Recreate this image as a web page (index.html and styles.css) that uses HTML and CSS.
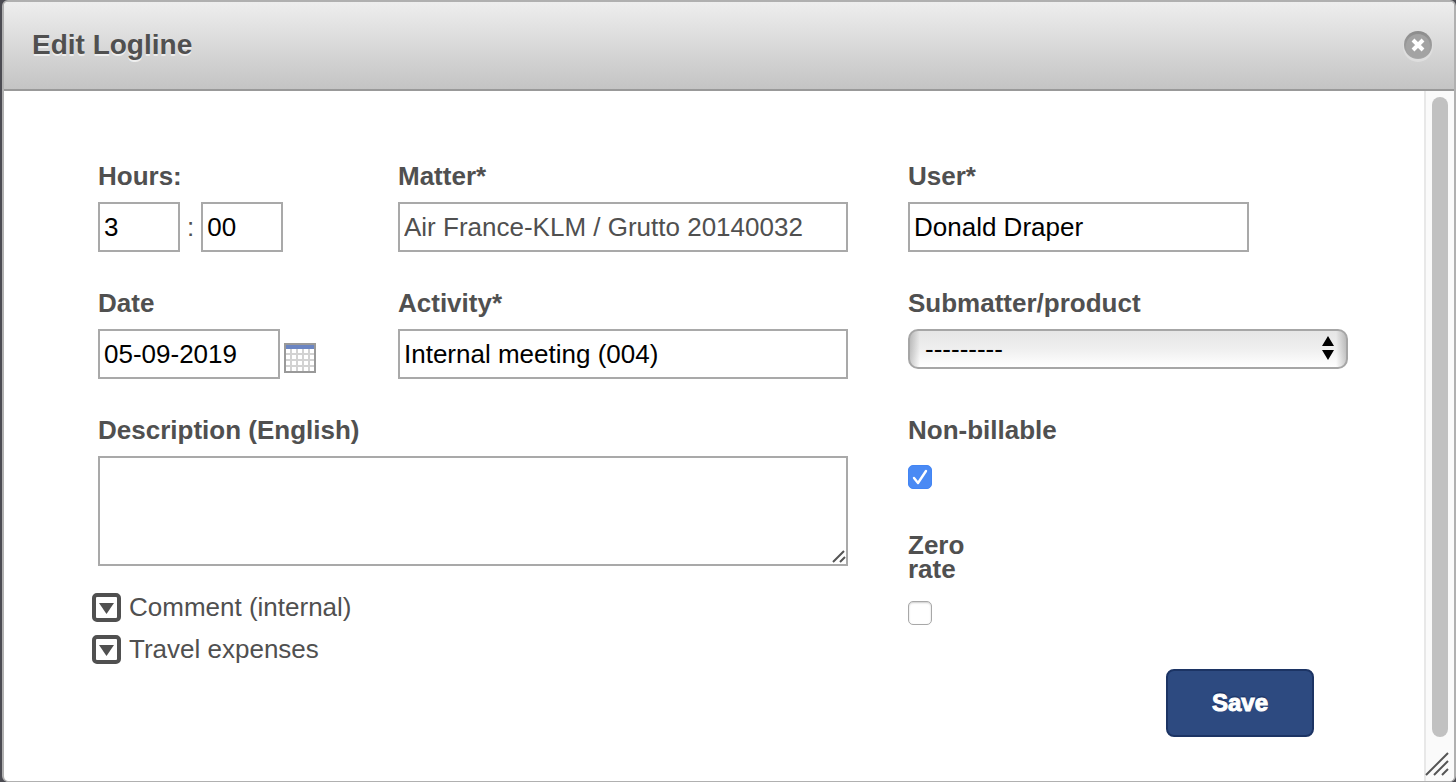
FILE: index.html
```html
<!DOCTYPE html>
<html lang="en">
<head>
    <meta charset="UTF-8">
    <meta name="viewport" content="width=device-width, initial-scale=1.0">
    <title>Edit Logline</title>
    <link rel="stylesheet" href="styles.css">
</head>
<body>
    <div class="dialog" role="dialog" aria-labelledby="dialog-title">
        <div class="dialog-header">
            <h1 id="dialog-title">Edit Logline</h1>
            <button type="button" class="close" aria-label="Close">
                <svg width="30" height="32" viewBox="0 0 30 32">
                    <defs>
                        <linearGradient id="disc" x1="0" y1="0" x2="0" y2="1">
                            <stop offset="0" stop-color="#8c8c8c"/>
                            <stop offset="1" stop-color="#a8a8a8"/>
                        </linearGradient>
                    </defs>
                    <circle cx="15" cy="17" r="15" fill="#dedede"/>
                    <circle cx="15" cy="15" r="14" fill="url(#disc)"/>
                    <circle cx="15" cy="16" r="12" fill="#a3a3a3"/>
                    <path d="M10 10l10 10M20 10l-10 10" stroke="#fff" stroke-width="4" fill="none"/>
                </svg>
            </button>
        </div>

        <div class="dialog-body">
            <form class="form">
                <div class="field">
                    <label for="hours">Hours:</label>
                    <div class="time">
                        <input type="text" id="hours" class="short" value="3">
                        <span>:</span>
                        <input type="text" class="short" value="00" aria-label="Minutes">
                    </div>
                </div>
                <div class="field">
                    <label for="matter">Matter*</label>
                    <input type="text" id="matter" value="Air France-KLM / Grutto 20140032" readonly>
                </div>
                <div class="field">
                    <label for="user">User*</label>
                    <input type="text" id="user" class="user" value="Donald Draper">
                </div>

                <div class="field">
                    <label for="date">Date</label>
                    <div class="date">
                        <input type="text" id="date" value="05-09-2019">
                        <button type="button" class="calendar" aria-label="Pick a date">
                            <svg width="32" height="30" viewBox="0 0 32 30">
                                <path fill="#999" d="M0 0h32v30H0z"/>
                                <path fill="#d2d2d2" d="M2 6h28v22H2z"/>
                                <path fill="#6b85c2" d="M2 2h28v4H2z"/>
                                <path stroke="#fff" stroke-width="4" stroke-dasharray="4 2" d="M2 8h28M2 14h28M2 20h28M2 26h28"/>
                            </svg>
                        </button>
                    </div>
                </div>
                <div class="field">
                    <label for="activity">Activity*</label>
                    <input type="text" id="activity" value="Internal meeting (004)">
                </div>
                <div class="field">
                    <label for="submatter">Submatter/product</label>
                    <div class="select">
                        <select id="submatter">
                            <option>---------</option>
                        </select>
                        <svg class="arrows" width="12" height="24" viewBox="0 0 12 24">
                            <path d="M6 0l6 10H0zM0 14h12L6 24z"/>
                        </svg>
                    </div>
                </div>

                <div class="field wide">
                    <label for="description">Description (English)</label>
                    <div class="textarea">
                        <textarea id="description"></textarea>
                        <svg class="grip" width="14" height="14" viewBox="0 0 14 14">
                            <path d="M1 13L12 2M8 13l5-5" stroke="#555" stroke-width="2" fill="none"/>
                        </svg>
                    </div>
                    <div class="toggles">
                        <a href="#comment">
                            <svg width="29" height="29" viewBox="0 0 29 29">
                                <rect x="2" y="2" width="25" height="25" rx="3" fill="none" stroke="#505050" stroke-width="4"/>
                                <path d="M7 10h15l-7.5 11z" fill="#505050"/>
                            </svg>
                            Comment (internal)
                        </a>
                        <a href="#travel">
                            <svg width="29" height="29" viewBox="0 0 29 29">
                                <rect x="2" y="2" width="25" height="25" rx="3" fill="none" stroke="#505050" stroke-width="4"/>
                                <path d="M7 10h15l-7.5 11z" fill="#505050"/>
                            </svg>
                            Travel expenses
                        </a>
                    </div>
                </div>
                <div class="options">
                    <label for="nonbillable">Non-billable</label>
                    <div class="check">
                        <input type="checkbox" id="nonbillable" checked>
                        <svg width="24" height="24" viewBox="0 0 24 24">
                            <path d="M6 13l4 5 8-12" stroke="#fff" stroke-width="2.4" fill="none" stroke-linecap="round" stroke-linejoin="round"/>
                        </svg>
                    </div>
                    <label for="zerorate" class="narrow">Zero rate</label>
                    <div class="check">
                        <input type="checkbox" id="zerorate">
                    </div>
                    <button type="submit" class="save">Save</button>
                </div>
            </form>

            <div class="scrollbar">
                <div class="thumb"></div>
                <svg class="resize" width="24" height="24" viewBox="0 0 24 24">
                    <path d="M1 23L23 1M9 23L23 9M17 23l6-6" stroke="#555" stroke-width="2" fill="none"/>
                </svg>
            </div>
        </div>
    </div>
</body>
</html>
```

FILE: styles.css
```css
* {
    box-sizing: border-box;
}

body {
    margin: 0;
    padding-left: 2px;
    background: #4b4b52;
    color: #505050;
    font-family: "Liberation Sans", Arial, sans-serif;
    font-size: 26px;
    line-height: 30px;
}

input,
select,
textarea,
button {
    margin: 0;
    font: inherit;
}

.dialog {
    display: flex;
    flex-direction: column;
    min-height: 100vh;
    border: 2px solid #b0b0b0;
    border-bottom-width: 1px;
    border-radius: 6px;
    background: #fff;
    overflow: hidden;
}

/* header */
.dialog-header {
    display: flex;
    align-items: center;
    justify-content: space-between;
    height: 89px;
    padding: 0 21px 2px 28px;
    border-bottom: 2px solid #999;
    background: linear-gradient(#eee, #c4c4c4);
}

h1 {
    margin: 0;
    font-size: 28px;
    text-shadow: 0 2px 0 #eee;
}

.close,
.calendar {
    padding: 0;
    border: 0;
    background: none;
    cursor: pointer;
}

.close {
    padding-top: 2px;
}

svg {
    display: block;
}

/* form */
.dialog-body {
    display: flex;
    flex: 1;
}

.form {
    display: grid;
    flex: 1;
    grid-template-columns: minmax(0, 240fr) minmax(0, 450fr) minmax(0, 440fr);
    gap: 36px 60px;
    align-content: start;
    padding: 70px 76px 42px 94px;
}

.wide {
    grid-column: span 2;
}

label {
    display: block;
    font-weight: bold;
}

.field label {
    margin-bottom: 11px;
}

input[type="text"],
textarea {
    display: block;
    width: 100%;
    height: 50px;
    padding: 0 4px;
    border: 2px solid #a9a9a9;
    border-radius: 0;
    background: #fff;
    color: #000;
}

input[readonly] {
    color: #505050;
}

.time,
.date {
    display: flex;
    align-items: center;
    gap: 7px;
}

.time .short {
    width: 82px;
}

.date {
    align-items: flex-end;
    gap: 4px;
}

.date input[type="text"] {
    width: 182px;
}

.calendar {
    margin-bottom: 6px;
}

input.user {
    width: 341px;
}

.select,
.textarea {
    position: relative;
}

select {
    display: block;
    width: 100%;
    height: 40px;
    padding: 0 40px 0 15px;
    border: 2px solid #a6a6a6;
    border-radius: 10px;
    background:
        linear-gradient(to right, rgba(0, 0, 0, 0.2), transparent 10px),
        linear-gradient(to left, rgba(0, 0, 0, 0.2), transparent 10px),
        linear-gradient(#e6e6e6, #efefef 50%, #fff);
    color: #000;
    appearance: none;
}

.arrows {
    position: absolute;
    top: 7px;
    right: 14px;
    pointer-events: none;
}

.textarea textarea {
    height: 110px;
    resize: vertical;
}

textarea::-webkit-resizer {
    background: #fff;
}

.grip {
    position: absolute;
    right: 2px;
    bottom: 3px;
    pointer-events: none;
}

.toggles {
    margin: 20px 0 0 -6px;
}

.toggles a {
    display: flex;
    align-items: center;
    gap: 8px;
    height: 42px;
    color: inherit;
    text-decoration: none;
}

/* right column */
.options {
    display: flex;
    flex-direction: column;
    align-items: flex-start;
}

.check {
    position: relative;
    margin: 20px 0 44px;
}

.check input {
    display: block;
    width: 24px;
    height: 24px;
    border: 1px solid #a8a8a8;
    border-radius: 5px;
    background: #fff;
    box-shadow: inset 0 1px 2px #ccc;
    appearance: none;
}

.check input:checked {
    border-color: #4285f4;
    background: #4a8af4;
    box-shadow: none;
}

.check svg {
    position: absolute;
    top: 0;
    left: 0;
    pointer-events: none;
}

.narrow {
    width: 70px;
    line-height: 24px;
}

.save {
    align-self: flex-end;
    width: 148px;
    height: 68px;
    margin-right: 34px;
    border: 2px solid #1c3464;
    border-radius: 8px;
    background: #2d4a80;
    color: #fff;
    font-size: 24px;
    font-weight: bold;
    text-shadow: 0 -2px 1px #1c3464;
    -webkit-text-stroke: 1px #fff;
    cursor: pointer;
}

/* scrollbar */
.scrollbar {
    display: flex;
    flex-direction: column;
    gap: 15px;
    width: 30px;
    padding: 6px 6px 5px;
    border-left: 2px solid #e8e8e8;
    background: #fafafa;
}

.thumb {
    flex: 1;
    border-radius: 8px;
    background: #c1c1c1;
}

.resize {
    margin-left: -7px;
}
```
